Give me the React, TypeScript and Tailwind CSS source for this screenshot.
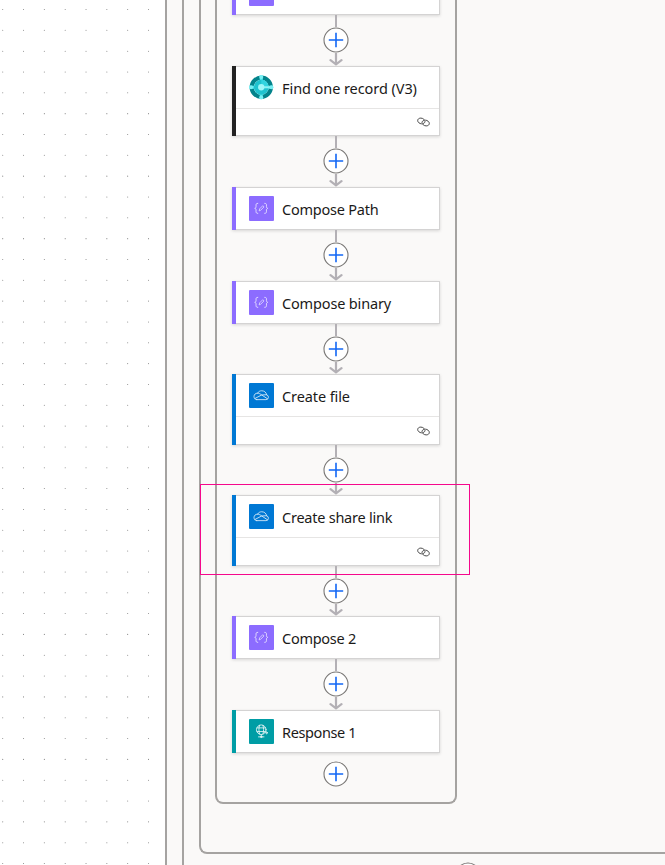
import React from "react";

type Kind = "compose" | "record" | "drive" | "response";

interface Step {
  title: string;
  kind: Kind;
  size: string;
  gap: string;
  tracking: string;
  linked?: boolean;
}

const steps: Step[] = [
  { title: "", kind: "compose", size: "h-[43px]", gap: "h-[51px]", tracking: "tracking-normal" },
  { title: "Find one record (V3)", kind: "record", size: "h-[70px]", gap: "h-[51px]", tracking: "tracking-[-0.07px]", linked: true },
  { title: "Compose Path", kind: "compose", size: "h-[43px]", gap: "h-[51px]", tracking: "tracking-[-0.22px]" },
  { title: "Compose binary", kind: "compose", size: "h-[43px]", gap: "h-[50px]", tracking: "tracking-[-0.16px]" },
  { title: "Create file", kind: "drive", size: "h-[71px]", gap: "h-[50px]", tracking: "tracking-[-0.1px]", linked: true },
  { title: "Create share link", kind: "drive", size: "h-[71px]", gap: "h-[50px]", tracking: "tracking-[-0.24px]", linked: true },
  { title: "Compose 2", kind: "compose", size: "h-[43px]", gap: "h-[51px]", tracking: "tracking-[-0.27px]" },
  { title: "Response 1", kind: "response", size: "h-[43px]", gap: "", tracking: "tracking-[-0.38px]" },
];

const accent: Record<Kind, string> = {
  compose: "bg-[#8c6cff]",
  record: "bg-[#222222]",
  drive: "bg-[#0078d4]",
  response: "bg-[#009da5]",
};

function StepIcon({ kind }: { kind: Kind }) {
  if (kind === "record") {
    return (
      <svg viewBox="0 0 24 24" className="size-[24.5px] shrink-0">
        <circle cx="12" cy="12" r="9.4" fill="none" stroke="#03838b" strokeWidth="4" />
        <path d="M12 .6V6M12 18v5.400M.6 12H6M18 12h5.400" stroke="#50e6ed" strokeWidth="3" />
        <circle cx="12" cy="12" r="7.300" fill="#1fc3cf" />
        <path d="M12 4.700a7.300 7.300 0 0 1 7.300 7.300H12z" fill="#32d4df" />
        <path d="M12 12h10.500" stroke="#8df2f5" strokeWidth="2" />
        <circle cx="12" cy="12" r="3.100" fill="#9ff6f8" />
        <circle cx="12" cy="2" r="2" fill="#78eff3" />
        <circle cx="12" cy="22" r="2" fill="#78eff3" />
        <circle cx="2" cy="12" r="2" fill="#78eff3" />
        <circle cx="22" cy="12" r="2" fill="#78eff3" />
      </svg>
    );
  }
  return (
    <span className={`size-[24.5px] shrink-0 rounded-[1px] ${accent[kind]}`}>
      <svg viewBox="0 0 24 24" className="size-full" fill="none" stroke="#ffffff" strokeLinecap="round" strokeLinejoin="round">
        {kind === "compose" && (
          <g strokeWidth=".9" opacity=".8">
            <path d="M8.600 7.200c-1.500 0-1.700.7-1.700 1.700v1.500c0 .9-.3 1.500-1.300 1.700 1 .2 1.300.8 1.300 1.700v1.500c0 1 .3 1.700 1.700 1.700" />
            <path d="M15.400 7.200c1.500 0 1.700.7 1.700 1.700v1.500c0 .9.3 1.500 1.300 1.700-1 .2-1.300.8-1.300 1.700v1.500c0 1-.3 1.700-1.700 1.700" />
            <path d="m10 14.200.5-1.700 3-3 1.200 1.200-3 3z" strokeWidth=".75" />
          </g>
        )}
        {kind === "drive" && (
          <g strokeWidth=".85" opacity=".85">
            <path d="M7.600 16.300h9a2.400 2.400 0 0 0 .7-4.700c-.4-2.500-2.500-4-4.800-4-1.900 0-3.200.8-4.100 2.400-2-.1-3.500 1.300-3.500 3.200 0 1.700 1.100 3.100 2.700 3.100z" />
            <path d="M8.400 10c1.800 0 2.700.8 4 1.700l5.600 3.700M5.800 15.200l6.600-3.500 4.900-.2" />
          </g>
        )}
        {kind === "response" && (
          <g strokeWidth=".85" opacity=".9">
            <circle cx="12" cy="10.500" r="4.700" />
            <path d="M10.300 6.300c-.8 2.700-.8 5.500 0 8.300M13.700 6.300c.8 2.700.8 5.500 0 8.300M8 8.700h8M8 12.300h8M12 15.200v2.200M9.300 17.500h5.400" />
            <path d="M15.500 13.500H18M17 12.500l1.300 1-1.300 1.100" />
            <circle cx="12" cy="17.500" r=".7" fill="#fff" />
          </g>
        )}
      </svg>
    </span>
  );
}

function LinkIcon() {
  return (
    <svg viewBox="0 0 13 10" className="h-[10px] w-[13px]" fill="none" stroke="#343434" strokeWidth=".9" strokeLinecap="round">
      <path d="M4.300 6.900C2.400 6.500.7 5.300.7 3.600c0-1.500 1.300-2.500 3.100-2.500 2.200 0 4.200 1.600 4.200 3.300 0 1.100-.7 1.800-1.700 2.100" />
      <path d="M8.700 3.100c1.900.4 3.600 1.600 3.600 3.300 0 1.500-1.300 2.500-3.100 2.500C7 8.900 5 7.300 5 5.600c0-1.100.7-1.800 1.700-2.100" />
    </svg>
  );
}

function AddButton() {
  return (
    <svg viewBox="0 0 26 26" className="size-[26px] shrink-0" fill="none">
      <circle cx="13" cy="13" r="12" fill="#fff" stroke="#797775" strokeWidth="1.100" />
      <path d="M13 5.800v14.400M5.800 13h14.400" stroke="#1267f5" strokeWidth="1.600" />
    </svg>
  );
}

function Connector({ gap }: { gap: string }) {
  return (
    <div className={`flex flex-col items-center ${gap}`}>
      <span className="h-3 w-[2px] shrink-0 bg-[#b3b0b5]" />
      <AddButton />
      <svg viewBox="0 0 14 13" className="min-h-0 w-[14px] flex-1" preserveAspectRatio="xMidYMax slice" fill="none" stroke="#b3b0b5" strokeWidth="2.200">
        <path d="M7 0v11.500M1.500 7.200 7 11.300l5.500-4.100" strokeLinejoin="round" strokeLinecap="round" />
      </svg>
    </div>
  );
}

function Card({ step }: { step: Step }) {
  return (
    <article className={`flex w-[208px] bg-white shadow-[0_1px_3px_rgba(0,0,0,0.14)] ${step.size}`}>
      <span className={`w-1 shrink-0 ${accent[step.kind]}`} />
      <div className="flex min-w-0 flex-1 flex-col border border-l-0 border-[#d4d3d3]">
        <header className="flex h-[41px] shrink-0 items-center gap-[8.500px] pl-[13px]">
          <StepIcon kind={step.kind} />
          {step.title && (
            <h2 className={`pt-[1px] text-[14.5px] leading-5 whitespace-nowrap text-[#1b1a19] ${step.tracking}`}>{step.title}</h2>
          )}
        </header>
        {step.linked && (
          <footer className="flex flex-1 items-center justify-end border-t border-[#e6e5e4] pr-[9px]">
            <LinkIcon />
          </footer>
        )}
      </div>
    </article>
  );
}

function DotGrid() {
  const columns = Array.from({ length: 8 }, (_, i) => 2.7 + i * 20.83);
  const rows = Array.from({ length: 42 }, (_, i) => 9.5 + i * 20.83);
  return (
    <svg className="h-full w-[165px] shrink-0 bg-white" fill="#858585">
      {rows.map((y) => columns.map((x) => <circle key={`${x}-${y}`} cx={x} cy={y} r=".53" />))}
    </svg>
  );
}

export default function App() {
  return (
    <main className="relative flex h-[865px] w-[665px] overflow-hidden bg-[#faf9f8] font-['Noto_Sans','Open_Sans',sans-serif]">
      <DotGrid />
      <div className="flex flex-1 border-l-2 border-[#a5a3a1] pl-[15px]">
        <div className="flex min-w-0 flex-1 flex-col border-l-2 border-[#a5a3a1] pl-[15px]">
          <section className="h-[854px] shrink-0 rounded-bl-[8px] border-b-2 border-l-2 border-[#a5a3a1] pl-[14px]">
            <div className="flex h-[804px] w-[242px] flex-col items-center overflow-hidden rounded-b-[8px] border-x-2 border-b-2 border-[#a5a3a1]">
              <div className="-mt-7 flex flex-col items-center">
                {steps.map((step) => (
                  <React.Fragment key={step.title}>
                    <Card step={step} />
                    {step.gap && <Connector gap={step.gap} />}
                  </React.Fragment>
                ))}
                <div className="pt-[8px]">
                  <AddButton />
                </div>
              </div>
            </div>
          </section>
          <div className="flex pt-[8px] pl-[256px]">
            <AddButton />
          </div>
        </div>
      </div>
      <div className="absolute top-[484px] left-[200px] h-[91px] w-[270px] border border-[#f5088c]" />
    </main>
  );
}
